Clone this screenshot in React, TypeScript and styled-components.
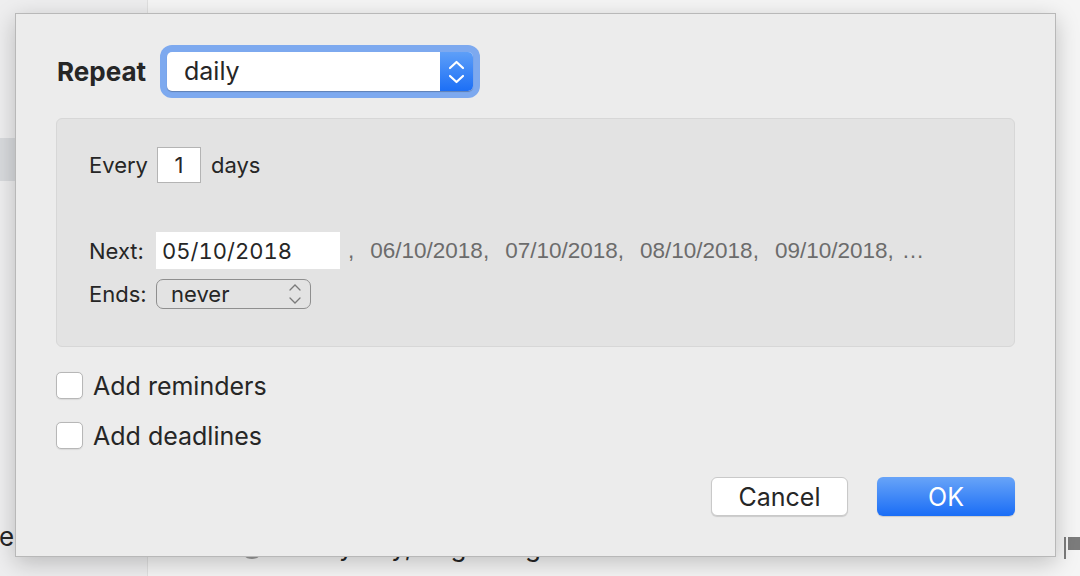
import React from "react";
import styled, { createGlobalStyle } from "styled-components";

const GlobalStyle = createGlobalStyle`
  html, body {
    margin: 0;
    padding: 0;
  }
  body {
    font-family: Inter, "Noto Sans", sans-serif;
    background: #f4f4f4;
    color: #262626;
  }
  #root {
    width: 1080px;
    height: 576px;
    overflow: hidden;
  }
`;

const Window = styled.div`
  position: relative;
  display: grid;
  grid-template-columns: 148px 1fr;
  width: 1080px;
  height: 576px;
  overflow: hidden;
`;

const Sidebar = styled.div`
  display: flex;
  flex-direction: column;
  padding-top: 138px;
  background: #eeeeef;
  border-right: 1px solid #e0e0e0;
  overflow: hidden;
`;

const SideItem = styled.div<{ $selected?: boolean }>`
  height: 43px;
  background: ${(p) => (p.$selected ? "#d8dadd" : "transparent")};
`;

const SideLabel = styled.div`
  margin-top: auto;
  margin-bottom: 24px;
  margin-left: -1px;
  font-size: 26px;
  line-height: 30px;
  white-space: nowrap;
`;

const Main = styled.div`
  display: flex;
  flex-direction: column;
  justify-content: flex-end;
  padding: 0 0 14px 92px;
  background: #f5f5f5;
  overflow: hidden;
`;

const TaskRow = styled.div`
  display: flex;
  align-items: center;
  gap: 20px;
  height: 30px;
  font-size: 26px;
  line-height: 30px;
  white-space: nowrap;
`;

const TaskCircle = styled.span`
  width: 20px;
  height: 20px;
  border: 2px solid #9a9a9a;
  border-radius: 50%;
  flex: none;
`;

const Flag = styled.svg`
  margin-left: auto;
  flex: none;
  align-self: flex-start;
  margin-top: 5px;
`;

const Dialog = styled.div`
  position: absolute;
  left: 15px;
  top: 13px;
  width: 1041px;
  height: 544px;
  box-sizing: border-box;
  display: flex;
  flex-direction: column;
  padding: 31px 40px 40px 40px;
  background: #ececec;
  border: 1px solid #b8b8b8;
  box-shadow: 0 6px 22px rgba(0, 0, 0, 0.22);
`;

const RepeatRow = styled.div`
  display: flex;
  align-items: center;
  gap: 14px;
  height: 53px;
`;

const RepeatLabel = styled.span`
  font-size: 26px;
  font-weight: 700;
  margin-left: 1px;
`;

const FocusRing = styled.div`
  width: 320px;
  height: 53px;
  box-sizing: border-box;
  padding: 7px;
  border-radius: 12px;
  background: #7da9ef;
`;

const PopupField = styled.div`
  display: flex;
  height: 100%;
  background: #ffffff;
  border-radius: 5px;
  box-shadow: 0 1px 1px rgba(0, 0, 0, 0.25);
  overflow: hidden;
`;

const PopupText = styled.span`
  flex: 1;
  padding-left: 17px;
  font-size: 25px;
  line-height: 39px;
`;

const Stepper = styled.div`
  width: 33px;
  display: flex;
  align-items: center;
  justify-content: center;
  background: linear-gradient(#5e9ff8, #1c6ff6);
`;

const Group = styled.div`
  margin-top: 20px;
  height: 229px;
  box-sizing: border-box;
  padding: 28px 32px 0;
  background: #e3e3e3;
  border: 1px solid #d7d7d7;
  border-radius: 6px;
  font-size: 22px;
`;

const Line = styled.div<{ $top?: number }>`
  display: flex;
  align-items: center;
  margin-top: ${(p) => p.$top ?? 0}px;
`;

const FieldLabel = styled.span`
  width: 67px;
  flex: none;
`;

const NumberBox = styled.span`
  width: 44px;
  height: 36px;
  box-sizing: border-box;
  margin: 0 10px 0 9px;
  display: flex;
  align-items: center;
  justify-content: center;
  background: #ffffff;
  border: 1px solid #b4b4b4;
`;

const DateField = styled.span`
  width: 184px;
  height: 37px;
  box-sizing: border-box;
  padding-left: 6px;
  display: flex;
  align-items: center;
  background: #ffffff;
  font-variant-numeric: tabular-nums;
`;

const Upcoming = styled.span<{ $gap: number }>`
  margin-left: ${(p) => p.$gap}px;
  font-family: "Liberation Sans", Arial, sans-serif;
  font-size: 22.5px;
  color: #6c6c6c;
  white-space: nowrap;
`;

const SmallPopup = styled.span`
  width: 155px;
  height: 30px;
  box-sizing: border-box;
  padding: 0 9px 0 14px;
  display: flex;
  align-items: center;
  justify-content: space-between;
  border: 1.5px solid #8f8f8f;
  border-radius: 7px;
`;

const CheckRow = styled.label<{ $top: number }>`
  display: flex;
  align-items: center;
  gap: 10px;
  height: 27px;
  margin-top: ${(p) => p.$top}px;
  font-size: 25px;
`;

const CheckBox = styled.span`
  width: 27px;
  height: 27px;
  box-sizing: border-box;
  background: #ffffff;
  border: 1px solid #b7b7b7;
  border-radius: 5px;
  box-shadow: 0 0.5px 1px rgba(0, 0, 0, 0.08);
`;

const ButtonRow = styled.div`
  display: flex;
  justify-content: flex-end;
  gap: 29px;
  margin-top: 28px;
`;

const Button = styled.button<{ $primary?: boolean }>`
  width: ${(p) => (p.$primary ? 138 : 137)}px;
  height: 39px;
  font-family: Inter, "Noto Sans", sans-serif;
  font-size: 25px;
  border-radius: 6px;
  cursor: pointer;
  color: ${(p) => (p.$primary ? "#ffffff" : "#262626")};
  background: ${(p) =>
    p.$primary ? "linear-gradient(#68a4f8, #1a6df6)" : "#ffffff"};
  border: ${(p) => (p.$primary ? "none" : "1px solid #c9c9c9")};
  box-shadow: 0 1px 1px rgba(0, 0, 0, 0.14);
`;

const upcoming = ["06/10/2018,", "07/10/2018,", "08/10/2018,", "09/10/2018,"];

const App = () => {
  return (
    <>
      <GlobalStyle />
      <Window>
        <Sidebar>
          <SideItem $selected />
          <SideLabel>ec</SideLabel>
        </Sidebar>
        <Main>
          <TaskRow>
            <TaskCircle />
            <span>Every day, beginning 2018 12:11</span>
            <Flag width="16" height="22" viewBox="0 0 16 22">
              <rect x="0" y="0" width="2" height="22" fill="#7c7c7c" />
              <rect x="4" y="0" width="12" height="13" fill="#7c7c7c" />
            </Flag>
          </TaskRow>
        </Main>

        <Dialog>
          <RepeatRow>
            <RepeatLabel>Repeat</RepeatLabel>
            <FocusRing>
              <PopupField>
                <PopupText>daily</PopupText>
                <Stepper>
                  <svg width="33" height="39" viewBox="0 0 33 39">
                    <polyline
                      points="10,16 16.5,10 23,16"
                      fill="none"
                      stroke="#fff"
                      strokeWidth="2.2"
                      strokeLinecap="round"
                      strokeLinejoin="round"
                    />
                    <polyline
                      points="10,24 16.5,30 23,24"
                      fill="none"
                      stroke="#fff"
                      strokeWidth="2.2"
                      strokeLinecap="round"
                      strokeLinejoin="round"
                    />
                  </svg>
                </Stepper>
              </PopupField>
            </FocusRing>
          </RepeatRow>

          <Group>
            <Line>
              <span>Every</span>
              <NumberBox>1</NumberBox>
              <span>days</span>
            </Line>
            <Line $top={49}>
              <FieldLabel>Next:</FieldLabel>
              <DateField>05/10/2018</DateField>
              <Upcoming $gap={8}>,</Upcoming>
              {upcoming.map((d) => (
                <Upcoming key={d} $gap={16}>
                  {d}
                </Upcoming>
              ))}
              <Upcoming $gap={8}>…</Upcoming>
            </Line>
            <Line $top={10}>
              <FieldLabel>Ends:</FieldLabel>
              <SmallPopup>
                <span>never</span>
                <svg width="12" height="22" viewBox="0 0 12 22">
                  <polyline
                    points="1,7 6,2 11,7"
                    fill="none"
                    stroke="#7a7a7a"
                    strokeWidth="1.3"
                    strokeLinecap="round"
                  />
                  <polyline
                    points="1,15 6,20 11,15"
                    fill="none"
                    stroke="#7a7a7a"
                    strokeWidth="1.3"
                    strokeLinecap="round"
                  />
                </svg>
              </SmallPopup>
            </Line>
          </Group>

          <CheckRow $top={25}>
            <CheckBox />
            <span>Add reminders</span>
          </CheckRow>
          <CheckRow $top={23}>
            <CheckBox />
            <span>Add deadlines</span>
          </CheckRow>

          <ButtonRow>
            <Button>Cancel</Button>
            <Button $primary>OK</Button>
          </ButtonRow>
        </Dialog>
      </Window>
    </>
  );
};

export default App;
